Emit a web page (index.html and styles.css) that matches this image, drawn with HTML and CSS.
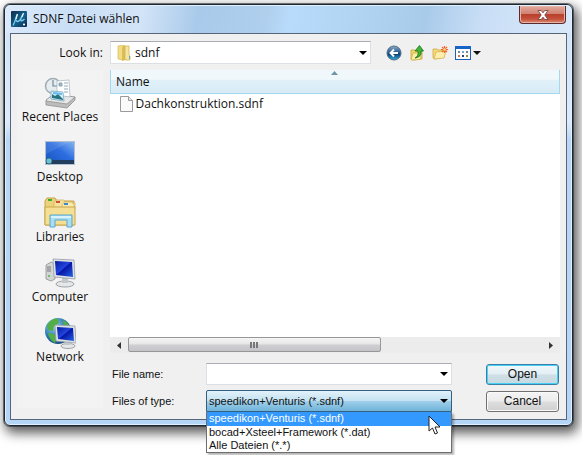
FILE: index.html
```html
<!DOCTYPE html>
<html lang="de">

<head>
    <meta charset="utf-8">
    <title>SDNF Datei wählen</title>
    <link rel="stylesheet" href="styles.css">
</head>

<body>
    <main class="dialog">
        <header class="titlebar">
            <svg class="app-icon" width="16" height="16" viewBox="0 0 16 16">
                <defs>
                    <linearGradient id="appBg" x1="0" y1="0" x2="1" y2="1">
                        <stop offset="0" stop-color="#0d2c4c" />
                        <stop offset=".55" stop-color="#14608a" />
                        <stop offset="1" stop-color="#0a2b4a" />
                    </linearGradient>
                </defs>
                <rect width="16" height="16" rx="1" fill="url(#appBg)" />
                <path d="M2 14.500C4 11 5 7 6 3.500M5 9q1 3 4 0l3-6M11 5 9.500 9q1 2 4-1" fill="none" stroke="#7fcdec" stroke-width="1.300" />
                <path d="M6.500 3 5 8M12.500 2 11 6" stroke="#e6f8ff" stroke-width="1.200" />
                <circle cx="13" cy="13.500" r="1.100" fill="#fff" />
            </svg>
            <h1>SDNF Datei wählen</h1>
            <button class="close-button" aria-label="Close">
                <svg width="12" height="10" viewBox="0 0 12 10">
                    <path d="M1 .5h3.200L6 2.800 7.800.500H11L7.800 5 11 9.500H7.800L6 7.200 4.200 9.500H1L4.200 5z" fill="#fff" stroke="#6b3a3a" stroke-width=".8" />
                </svg>
            </button>
        </header>

        <div class="content">
            <label class="look-label" for="lookIn">Look in:</label>
            <div class="look-row">
                <div class="look-box">
                    <svg class="folder-icon" width="14" height="16" viewBox="0 0 14 16">
                        <path d="M1 1 7 0v15l-6-1z" fill="#f3dc83" stroke="#d9ba55" stroke-width=".7" />
                        <path d="M5 2 8 0v15l-3 1z" fill="#dcbd5c" />
                        <path d="M8 1h4v9l1 1v4H8z" fill="#f6e59c" stroke="#cfae4a" stroke-width=".7" />
                        <path d="M12.500 11v3" stroke="#6ca3b8" />
                    </svg>
                    <select id="lookIn" class="combo look-select">
                        <option>sdnf</option>
                    </select>
                </div>
                <div class="toolbar">
                    <button aria-label="Back">
                        <svg width="16" height="16" viewBox="0 0 16 16">
                            <defs>
                                <linearGradient id="backBg" x1="0" y1="0" x2="0" y2="1">
                                    <stop offset="0" stop-color="#8fabc8" />
                                    <stop offset=".5" stop-color="#1d5489" />
                                    <stop offset=".6" stop-color="#0c4778" />
                                    <stop offset="1" stop-color="#35b4dc" />
                                </linearGradient>
                            </defs>
                            <circle cx="8" cy="8" r="7" fill="url(#backBg)" stroke="#526b85" />
                            <path d="M12 8H5M8 4.500 4.500 8 8 11.500" fill="none" stroke="#fff" stroke-width="1.900" />
                        </svg>
                    </button>
                    <button aria-label="Up one level">
                        <svg width="16" height="16" viewBox="0 0 16 16">
                            <path d="M2 5h4l1 1h6v8l-9 1-2-1z" fill="#f2d66d" stroke="#c7a238" stroke-width=".8" />
                            <path d="M4 8h9l-2 6.500-9 .5z" fill="#fbeea6" stroke="#cfae4a" stroke-width=".8" />
                            <path d="M6 13q4-2 3-7H6l4.500-5.500L14.500 6H12q1 6-6 7z" fill="#43b536" stroke="#176f1c" stroke-width=".8" />
                        </svg>
                    </button>
                    <button aria-label="New folder">
                        <svg width="16" height="16" viewBox="0 0 16 16">
                            <path d="M1 4h4l1 1h6v7l-9 2-2-1z" fill="#f4da78" stroke="#d0aa42" stroke-width=".8" />
                            <path d="M4 7l10-1-2 7-10 1z" fill="#fcefae" stroke="#d8b44d" stroke-width=".8" />
                            <path d="M12.500 1v7M9 4.500h7M10 2l5 5M15 2l-5 5" stroke="#f0632b" stroke-width="1.200" />
                            <circle cx="12.500" cy="4.500" r="1.300" fill="#ffe08a" />
                        </svg>
                    </button>
                    <button class="view-button" aria-label="View menu">
                        <svg width="16" height="16" viewBox="0 0 16 16">
                            <rect x=".5" y="1.500" width="15" height="13" fill="#fff" stroke="#1c5fb8" />
                            <rect x="0" y="1" width="16" height="3" fill="#1763c6" />
                            <path d="M3 6h2v2H3zM11 6h2v2h-2z" fill="#7b8894" />
                            <path d="M7 6h2v2H7z" fill="#76a7d8" />
                            <path d="M3 10h2v2H3z" fill="#d9735c" />
                            <path d="M7 10h2v2H7z" fill="#24467e" />
                            <path d="M11 10h2v2h-2z" fill="#a08b42" />
                        </svg>
                        <svg width="8" height="4" viewBox="0 0 8 4">
                            <path d="M0 0h8L4 4z" fill="#111" />
                        </svg>
                    </button>
                </div>
            </div>

            <!-- places bar -->
            <nav class="places">
                <button>
                    <svg width="32" height="32" viewBox="0 0 32 32">
                        <path d="M2 23 10 17l21 3-6 9-22-2z" fill="#e7e7e7" stroke="#9b9b9b" />
                        <path d="M2 24v4l21 3 8-8v-3l-8 7z" fill="#bcbcbc" stroke="#888" stroke-width=".7" />
                        <circle cx="9" cy="9" r="7.500" fill="#e6edf0" stroke="#a2adb2" stroke-width="1.500" />
                        <path d="M9 3v6h5" fill="none" stroke="#789" stroke-width="1.200" />
                        <path d="m13 4 12-1 1 17-13-2z" fill="#fff" stroke="#a5b2bb" stroke-width=".7" />
                        <path d="M15 6h3v3h-3zM20 6h4M20 9h4M20 12h4M20 15h4" fill="#9bb5c5" stroke="#91a8b5" />
                        <path d="m7 14 12 1 1 9-13-2z" fill="#d9f2fb" stroke="#7ba8bf" stroke-width=".8" />
                        <path d="m8 17 3 2 3-2 5 5v1L8 21z" fill="#267482" />
                        <path d="m9 15 9 1v2l-9-1z" fill="#61b8ed" />
                    </svg>
                    Recent Places
                </button>
                <button>
                    <svg width="32" height="32" viewBox="0 0 32 32">
                        <defs>
                            <linearGradient id="deskBg" x1="0" y1="1" x2="1" y2="0">
                                <stop offset="0" stop-color="#1555bd" />
                                <stop offset=".55" stop-color="#2d6de0" />
                                <stop offset="1" stop-color="#83b4f2" />
                            </linearGradient>
                        </defs>
                        <rect x="1" y="4" width="30" height="24" fill="#b4c0ce" />
                        <rect x="2" y="5" width="28" height="21" fill="url(#deskBg)" />
                        <path d="M2 5h24L2 17z" fill="#fff" opacity=".1" />
                        <rect x="2" y="23" width="28" height="4" fill="#213e60" />
                        <circle cx="5" cy="24" r="3" fill="#6cc1cf" stroke="#285a78" stroke-width=".7" />
                    </svg>
                    Desktop
                </button>
                <button>
                    <svg width="32" height="32" viewBox="0 0 32 32">
                        <path d="M1 4 3 1h8l2 3h17v24H1z" fill="#ecd27b" stroke="#c6a349" />
                        <path d="M10 6 12 3h8l2 3h9v6H10z" fill="#f5e29d" stroke="#cfae57" stroke-width=".7" />
                        <path d="M18 8 20 5h8l2 3v5H18z" fill="#f9eab2" stroke="#cfae57" stroke-width=".7" />
                        <path d="M4 2h4v2H4z" fill="#3dac37" />
                        <path d="M12 4h4v2h-4z" fill="#d54e38" />
                        <path d="M20 6h4v2h-4z" fill="#3b8bc8" />
                        <path d="M1 10h30v18H1z" fill="#f5df94" stroke="#caa64d" />
                        <path d="M6 18h22v12h-5v-7H11v7H6z" fill="#a9ddf2" stroke="#5aa7cd" />
                        <path d="M7 20h20" stroke="#e8faff" stroke-width="1.500" />
                    </svg>
                    Libraries
                </button>
                <button>
                    <svg width="32" height="32" viewBox="0 0 32 32">
                        <defs>
                            <linearGradient id="screenBg" x1="0" y1="0" x2="1" y2="1">
                                <stop offset="0" stop-color="#081b9c" />
                                <stop offset=".45" stop-color="#2145dd" />
                                <stop offset=".5" stop-color="#0716a6" />
                                <stop offset="1" stop-color="#2562e5" />
                            </linearGradient>
                        </defs>
                        <path d="m2 8 5-3 4 2v15l-4 2-5-2z" fill="#d3d5d4" stroke="#8d9190" stroke-width=".8" />
                        <path d="M3 10h4M3 12h4M3 14h4" stroke="#777" />
                        <circle cx="5" cy="19" r="1" fill="#49b64a" />
                        <ellipse cx="21" cy="27" rx="9" ry="3" fill="#e5e8ea" stroke="#9da2a6" />
                        <path d="M18 20h6v6h-6z" fill="#c1c7cb" />
                        <path d="m9 2 21 1 1 19-21-2z" fill="#dde2e6" stroke="#969da5" stroke-width=".8" />
                        <path d="m11 4 17 1 1 15-17-2z" fill="url(#screenBg)" />
                    </svg>
                    Computer
                </button>
                <button>
                    <svg width="32" height="32" viewBox="0 0 32 32">
                        <defs>
                            <radialGradient id="globeBg" cx=".35" cy=".3" r=".8">
                                <stop offset="0" stop-color="#9bd8ee" />
                                <stop offset=".6" stop-color="#2672ae" />
                                <stop offset="1" stop-color="#164177" />
                            </radialGradient>
                        </defs>
                        <circle cx="14" cy="14" r="13" fill="url(#globeBg)" />
                        <path d="M3 8q6-8 11-6l1 4-5 3-1 5-5-1zM4 16l6 1 3 4-2 5q-6-3-7-10zM19 3q5 2 7 8l-6-1z" fill="#52ae45" />
                        <ellipse cx="24" cy="29" rx="7" ry="2.500" fill="#e5e8ea" stroke="#9da2a6" />
                        <path d="M21 24h5v4h-5z" fill="#c1c7cb" />
                        <path d="m11 8 20 1 1 17-20-2z" fill="#dde2e6" stroke="#969da5" stroke-width=".8" />
                        <path d="m13 10 16 1 1 13-16-2z" fill="url(#screenBg)" />
                    </svg>
                    Network
                </button>
            </nav>

            <div class="right-side">
                <section class="file-panel">
                    <table class="file-list">
                        <thead>
                            <tr>
                                <th>Name
                                    <svg class="sort-icon" width="7" height="4" viewBox="0 0 7 4">
                                        <path d="M0 4 3.500 0 7 4z" fill="#6f95a8" />
                                    </svg>
                                </th>
                            </tr>
                        </thead>
                        <tbody>
                            <tr>
                                <td>
                                    <div class="file">
                                        <svg width="13" height="16" viewBox="0 0 13 16">
                                            <path d="M.5.500h8l4 4v11H.5z" fill="#fafafa" stroke="#9a9a9a" />
                                            <path d="M8.500.500v4h4" fill="#e4e4e4" stroke="#9a9a9a" />
                                        </svg>
                                        Dachkonstruktion.sdnf
                                    </div>
                                </td>
                            </tr>
                        </tbody>
                    </table>
                    <div class="scrollbar">
                        <button aria-label="Scroll left">
                            <svg width="4" height="7" viewBox="0 0 4 7"><path d="M4 0v7L0 3.500z" fill="#333" /></svg>
                        </button>
                        <div class="track">
                            <div class="thumb"><i></i><i></i><i></i></div>
                        </div>
                        <button aria-label="Scroll right">
                            <svg width="4" height="7" viewBox="0 0 4 7"><path d="M0 0v7l4-3.500z" fill="#333" /></svg>
                        </button>
                    </div>
                </section>

                <form class="file-form">
                    <label for="fileName">File name:</label>
                    <input id="fileName" class="combo" type="text">
                    <button class="push default" type="button">Open</button>

                    <label for="fileType">Files of type:</label>
                    <div class="type-box">
                        <select id="fileType" class="combo opened">
                            <option>speedikon+Venturis (*.sdnf)</option>
                            <option>bocad+Xsteel+Framework (*.dat)</option>
                            <option>Alle Dateien (*.*)</option>
                        </select>
                        <ul class="menu">
                            <li class="selected">speedikon+Venturis (*.sdnf)</li>
                            <li>bocad+Xsteel+Framework (*.dat)</li>
                            <li>Alle Dateien (*.*)</li>
                        </ul>
                        <svg class="pointer" width="13" height="20" viewBox="0 0 13 20">
                            <path d="M1 1v15l3.500-3 2.500 6 2.500-1-2.500-6h5z" fill="#fff" stroke="#222" />
                        </svg>
                    </div>
                    <button class="push" type="button">Cancel</button>
                </form>
            </div>
        </div>
    </main>
</body>

</html>
```
FILE: styles.css
```css
* {
    box-sizing: border-box;
}

body {
    margin: 0;
    padding: 4px 9px 29px 4px;
    height: 100vh;
    overflow: hidden;
    background: #fff;
    color: #111;
    font: 12px/16px "Open Sans", "Noto Sans", sans-serif;
}

button,
input,
select {
    font: inherit;
    color: inherit;
    margin: 0;
}

button {
    padding: 0;
    border: none;
    background: none;
}

svg {
    display: block;
    flex: none;
}

.dialog {
    height: 100%;
    display: flex;
    flex-direction: column;
    padding: 0 5px 5px;
    border: 1px solid #1c2730;
    border-radius: 6px;
    background: linear-gradient(#cfe2f7, #dcebfb 28%, #b9d7f4 32%, #b4d5f5);
    box-shadow: inset 0 0 0 1px #e0f0ff, 0 0 0 1px rgba(40, 45, 50, .6), 3px 5px 12px 2px rgba(0, 0, 0, .65);
}

/* title bar */
.titlebar {
    display: flex;
    align-items: flex-start;
    gap: 6px;
    height: 28px;
    flex: none;
    margin: 0 -4px;
    padding-left: 5px;
    border-top: 1px solid #e0f0ff;
    border-radius: 5px 5px 0 0;
    background: linear-gradient(100deg, #dceafa 0%, #c9def5 12%, #d3e4f7 24%, #a9caea 34%, #afcfed 46%, #b9dbfb 50%, #b2d4f3 62%, #a9cbea 74%, #c9def6 84%, #d9e8fa 100%);
}

.titlebar .app-icon {
    margin-top: 5px;
}

.titlebar h1 {
    flex: 1;
    margin: 5px 0 0;
    font-size: 12px;
    font-weight: normal;
}

.close-button {
    display: flex;
    align-items: center;
    justify-content: center;
    width: 47px;
    height: 18px;
    margin-right: 5px;
    border: 1px solid #5b2a2c;
    border-top: none;
    border-radius: 0 0 4px 4px;
    background: linear-gradient(#e3a99d, #d08372 45%, #b8402c 50%, #c4503a 75%, #dc8a70);
    box-shadow: inset 0 0 0 1px #e5b5aa;
}

/* client area */
.content {
    flex: 1;
    min-height: 0;
    display: grid;
    grid-template-columns: 86px 1fr;
    grid-template-rows: 23px 1fr;
    gap: 6px 7px;
    padding: 7px 6px;
    border: 1px solid #56657a;
    background: #f0f0f0;
}

.look-label {
    align-self: center;
    text-align: right;
}

.look-row {
    display: flex;
    align-items: center;
    gap: 15px;
}

.look-box {
    position: relative;
    flex: 1;
}

.folder-icon {
    position: absolute;
    left: 7px;
    top: 4px;
}

.combo {
    appearance: none;
    width: 100%;
    min-width: 0;
    height: 22px;
    padding: 0 18px 0 2px;
    border: 1px solid #dcdfe3;
    border-top-color: #abadb3;
    border-radius: 0;
    outline: none;
    background: #fff url("data:image/svg+xml,%3Csvg xmlns='http://www.w3.org/2000/svg' width='8' height='4'%3E%3Cpath d='M0 0h8L4 4z'/%3E%3C/svg%3E") no-repeat right 3px center;
}

.look-select {
    display: block;
    height: 23px;
    padding-left: 24px;
}

.toolbar {
    display: flex;
    gap: 7px;
    padding-right: 79px;
}

.view-button {
    display: flex;
    align-items: center;
    gap: 2px;
}

/* places bar */
.places {
    display: flex;
    flex-direction: column;
    gap: 12px;
    margin-bottom: 4px;
    padding-top: 7px;
    background: #f3f3f3;
}

.places button {
    display: flex;
    flex-direction: column;
    align-items: center;
    height: 48px;
    line-height: 16px;
    white-space: nowrap;
}

.right-side {
    display: flex;
    flex-direction: column;
    min-width: 0;
}

/* file list */
.file-panel {
    flex: 1;
    display: flex;
    flex-direction: column;
    background: #fff;
}

.file-list {
    width: 100%;
    border-collapse: collapse;
}

.file-list th {
    position: relative;
    height: 23px;
    padding: 2px 5px 0;
    border: solid #a3d9f0;
    border-width: 0 1px 1px;
    background: linear-gradient(#f0f8fc 40%, #e0f0f8 45%, #d7ebf5);
    font-weight: normal;
    text-align: left;
}

.sort-icon {
    position: absolute;
    left: 49%;
    top: 1px;
}

.file-list td {
    padding: 2px 9px;
}

.file {
    display: flex;
    align-items: center;
    gap: 3px;
}

.scrollbar {
    display: flex;
    height: 16px;
    margin-top: auto;
    background: #ececec;
}

.scrollbar button {
    display: flex;
    align-items: center;
    justify-content: center;
    width: 18px;
}

.track {
    flex: 1;
}

.thumb {
    display: flex;
    align-items: center;
    justify-content: center;
    gap: 1px;
    width: 61%;
    height: 15px;
    border: 1px solid #979797;
    border-radius: 2px;
    background: linear-gradient(#f5f5f5, #e6e6e8 48%, #cfcfd3 52%, #c3c3c8);
}

.thumb i {
    width: 2px;
    height: 6px;
    background: #777;
}

/* name and type fields */
.file-form {
    display: grid;
    grid-template-columns: 92px 1fr 73px;
    gap: 5px 0;
    align-items: center;
    padding: 10px 1px 0 2px;
    font: 12px/13px "Liberation Sans", Arial, sans-serif;
}

.file-form .combo {
    display: block;
}

.file-form label {
    font-size: 11px;
}

#fileName,
.type-box {
    width: auto;
    margin: 0 34px 0 2px;
}

.type-box {
    position: relative;
    font-size: 11px;
}

.combo.opened {
    border: 1px solid #33607f;
    border-radius: 2px 2px 0 0;
    background-color: #a8d5ee;
    background-image: url("data:image/svg+xml,%3Csvg xmlns='http://www.w3.org/2000/svg' width='8' height='4'%3E%3Cpath d='M0 0h8L4 4z'/%3E%3C/svg%3E"), linear-gradient(#e2f2fa, #c4e2f2 48%, #9fcfea 52%, #70b3d9);
    background-position: right 3px center, 0 0;
}

.menu {
    position: absolute;
    top: 100%;
    left: 0;
    right: 0;
    margin: 0;
    padding: 0;
    list-style: none;
    border: 1px solid #6d6d6d;
    border-top: none;
    background: #fff;
    box-shadow: 2px 2px 2px rgba(0, 0, 0, .3);
}

.menu li {
    height: 13px;
    padding-left: 2px;
    white-space: nowrap;
}

.menu .selected {
    height: 14px;
    background: #3399ff;
    color: #fff;
}

.pointer {
    position: absolute;
    right: 11px;
    top: 25px;
}

.push {
    height: 21px;
    border: 1px solid #707070;
    border-radius: 3px;
    background: linear-gradient(#f4f4f4, #ececec 48%, #dddddd 52%, #d0d0d0);
    box-shadow: inset 0 0 0 1px #fafafa;
}

.push.default {
    border-color: #3c7fa5;
    background: linear-gradient(#f0f7fa, #e3eff4 48%, #cfdfe6 52%, #c6d9e1);
    box-shadow: inset 0 0 0 1px #46d0f5;
}
```
